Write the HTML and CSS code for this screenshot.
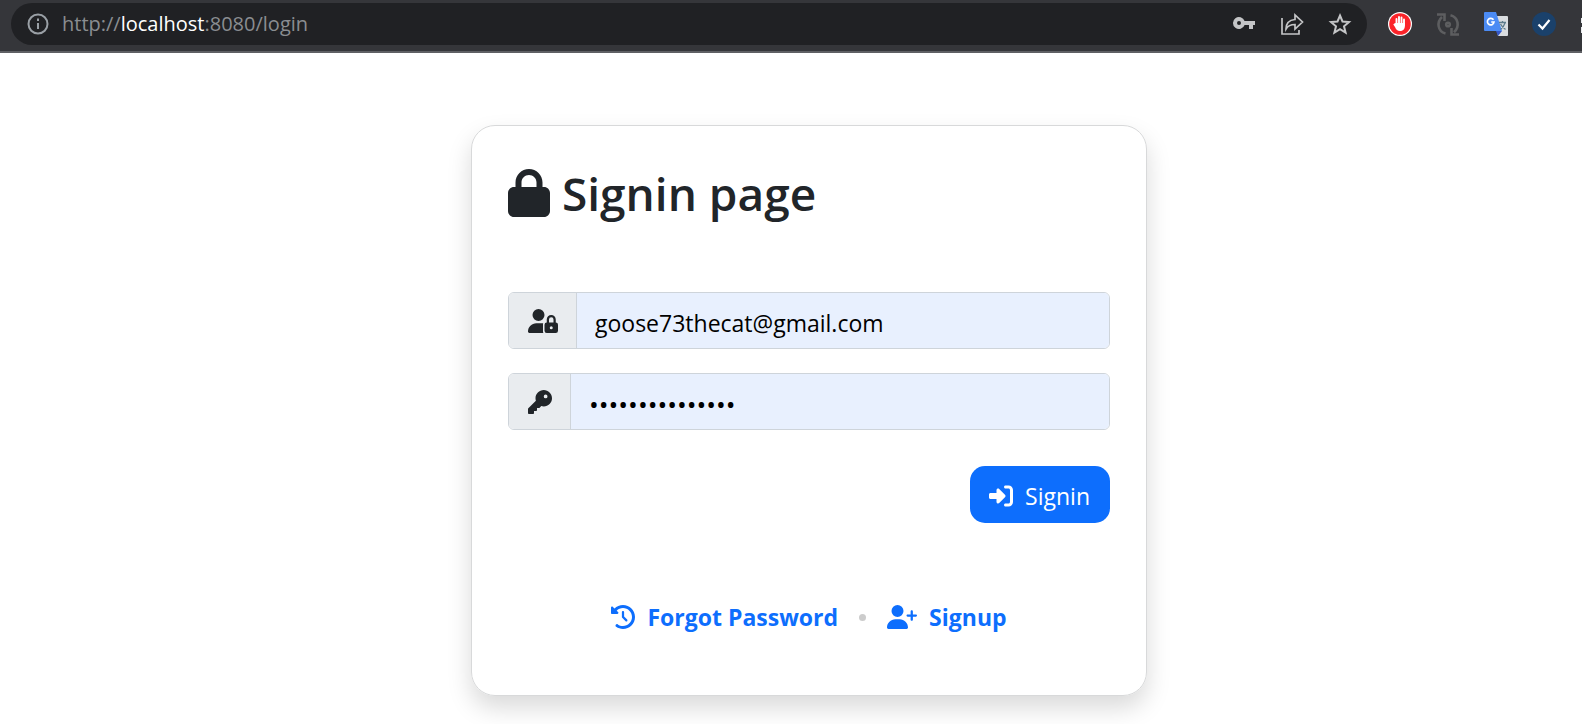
FILE: index.html
```html
<!DOCTYPE html>
<html lang="en">
<head>
<meta charset="utf-8">
<title>Signin page</title>
<link rel="stylesheet" href="styles.css">
</head>
<body>
<header class="toolbar">
  <div class="omnibox">
    <svg class="info" viewBox="0 0 22 22" fill="none" stroke="currentColor" stroke-width="2"><circle cx="11" cy="11" r="9.5"/><path d="M11 10v6M11 5.500v2.500"/></svg>
    <div class="url">http://<span class="host">localhost</span>:8080/login</div>
    <button class="tool" aria-label="Passwords"><svg viewBox="0 0 24 24" fill="currentColor"><path fill-rule="evenodd" d="M12.600 9A6 6 0 1 0 12.600 13H17v4h4v-4h2V9zM7 13a2 2 0 1 1 0-4 2 2 0 0 1 0 4z"/></svg></button>
    <button class="tool" aria-label="Share"><svg viewBox="0 0 24 24" fill="none" stroke="currentColor" stroke-width="1.700"><path d="M2 6v16h17v-4M6 17c0-6 4-9 9-9.500V3l7.500 7-7.500 7v-4.500c-4 0-7 1-9 4.500z"/></svg></button>
    <button class="tool" aria-label="Bookmark"><svg viewBox="0 0 24 24" fill="none" stroke="currentColor" stroke-width="2"><path d="M12 3.500l2.500 6 6.500.500-5 4.300 1.600 6.400L12 17.200l-5.600 3.500L8 14.300 3 10l6.500-.500z"/></svg></button>
  </div>
  <div class="extensions">
    <button class="tool" aria-label="Ad blocker"><svg viewBox="0 0 24 24"><circle cx="12" cy="12" r="12" fill="#fff"/><circle cx="12" cy="12" r="10.800" fill="#fb2329"/><path d="M8.500 13V7M11 12V5M13.500 12V5.500M16 13V7.500" stroke="#fff" stroke-width="1.900" stroke-linecap="round"/><path d="M7.600 11h9.300v3c0 3-2 5-4.900 5-2.500 0-4-1.500-5-4l-1.700-2.500 1-1z" fill="#fff"/></svg></button>
    <button class="tool" aria-label="Reload extension"><svg viewBox="0 0 24 24" fill="none" stroke="#5d5e60" stroke-width="2.600"><circle cx="12" cy="12.500" r="1.800"/><path d="M9.500 21.500C1.500 19.500.500 10 6 5M14.500 3.200c8 2 9.500 11.500 3.500 17M1 2.500h7.500V9M23 22.500h-7.500V16"/></svg></button>
    <button class="tool" aria-label="Translate"><svg viewBox="0 0 24 24"><path d="M10 4h13a1 1 0 0 1 1 1v18a1 1 0 0 1-1 1H14z" fill="#d9dcdf"/><path d="M12 19h6l-4 5z" fill="#3457c8"/><path d="M1 0h11l6 19H1a1 1 0 0 1-1-1V1a1 1 0 0 1 1-1z" fill="#4b8bf4"/><path d="M9.500 7.800A3.300 3.300 0 1 0 10 10H7.200" fill="none" stroke="#fff" stroke-width="1.700"/><path d="M15 10.500h7M18.500 9v1.500M21 11c-1 3-2.500 5-4.500 6.500M16.500 12c1 2 3 4 5 5.500" fill="none" stroke="#5f7d8c" stroke-width="1.300"/></svg></button>
    <button class="tool" aria-label="Checker"><svg viewBox="0 0 24 24" fill="none"><circle cx="12" cy="12" r="12" fill="#1a416b"/><path d="M6.500 12.500l4 4L17.500 8" stroke="#fff" stroke-width="2.200"/></svg></button>
    <button class="tool" aria-label="Extensions"><svg viewBox="0 0 24 24" fill="#e8eaed"><path d="M1 6h4V3h6v3h9v15H1v-6h3v-4H1z"/></svg></button>
  </div>
</header>
<main class="page">
  <form class="card">
    <h1 class="title"><svg viewBox="0 0 448 512" fill="currentColor"><path d="M144 144v48H304V144c0-44.200-35.800-80-80-80s-80 35.800-80 80zM80 192V144C80 64.500 144.500 0 224 0s144 64.500 144 144v48h16c35.300 0 64 28.700 64 64V448c0 35.300-28.700 64-64 64H64c-35.300 0-64-28.700-64-64V256c0-35.300 28.700-64 64-64H80z"/></svg>Signin page</h1>
    <div class="group">
      <label class="addon" for="email"><svg class="wide" viewBox="0 0 640 512" fill="currentColor" role="img" aria-label="Email"><path fill-rule="evenodd" d="M224 256A128 128 0 1 0 224 0a128 128 0 1 0 0 256zM178 304h146c-3 10-4 20-4 32v144c0 12 3 23 8 32H30c-17 0-30-13-30-30C0 384 80 304 178 304zM400 288v-64a96 96 0 0 1 192 0v64a48 48 0 0 1 48 48v128a48 48 0 0 1-48 48H400a48 48 0 0 1-48-48V336a48 48 0 0 1 48-48zm48 0h96v-64a48 48 0 0 0-96 0zm48 80a32 32 0 1 0 0 64 32 32 0 0 0 0-64z"/></svg></label>
      <input class="field" id="email" type="email" value="goose73thecat@gmail.com">
    </div>
    <div class="group">
      <label class="addon" for="password"><svg viewBox="0 0 512 512" fill="currentColor" role="img" aria-label="Password"><path d="M336 352c97.200 0 176-78.800 176-176S433.200 0 336 0S160 78.800 160 176c0 18.700 2.900 36.800 8.300 53.700L7 391c-4.500 4.500-7 10.600-7 17v80c0 13.300 10.700 24 24 24h80c13.300 0 24-10.700 24-24V448h40c13.300 0 24-10.700 24-24V384h40c6.400 0 12.500-2.500 17-7l33.300-33.300c16.900 5.400 35 8.300 53.700 8.300zM376 96a40 40 0 1 1 0 80 40 40 0 1 1 0-80z"/></svg></label>
      <input class="field secret" id="password" type="password" value="goose73password">
    </div>
    <button class="submit" type="submit"><svg viewBox="0 0 512 512" fill="currentColor"><path d="M217.900 105.900L340.700 228.700c7.200 7.200 11.300 17.100 11.300 27.300s-4.100 20.100-11.300 27.300L217.900 406.100c-6.400 6.400-15 9.900-24 9.900c-18.700 0-33.900-15.200-33.900-33.900l0-62.100L32 320c-17.700 0-32-14.300-32-32l0-64c0-17.700 14.300-32 32-32l128 0 0-62.100c0-18.700 15.200-33.900 33.900-33.900c9 0 17.600 3.600 24 9.900zM352 416l64 0c17.700 0 32-14.300 32-32l0-256c0-17.700-14.300-32-32-32l-64 0c-17.700 0-32-14.300-32-32s14.300-32 32-32l64 0c53 0 96 43 96 96l0 256c0 53-43 96-96 96l-64 0c-17.700 0-32-14.300-32-32s14.300-32 32-32z"/></svg>Signin</button>
    <nav class="links">
      <a href="#forgot"><svg viewBox="0 0 512 512" fill="currentColor"><path d="M75 75L41 41C25.900 25.900 0 36.600 0 57.900V168c0 13.300 10.700 24 24 24H134.100c21.400 0 32.100-25.900 17-41l-30.800-30.800C155 85.500 203 64 256 64c106 0 192 86 192 192s-86 192-192 192c-40.800 0-78.600-12.700-109.700-34.400c-14.500-10.100-34.400-6.600-44.600 7.900s-6.600 34.400 7.900 44.600C151.200 495 201.700 512 256 512c141.400 0 256-114.600 256-256S397.400 0 256 0C185.300 0 121.300 28.700 75 75zm181 53c-13.300 0-24 10.700-24 24V256c0 6.400 2.500 12.500 7 17l72 72c9.400 9.400 24.600 9.400 33.900 0s9.400-24.600 0-33.900l-65-65V152c0-13.300-10.700-24-24-24z"/></svg>Forgot Password</a>
      <span class="dot"></span>
      <a href="#signup"><svg class="wide" viewBox="0 0 640 512" fill="currentColor"><path d="M96 128a128 128 0 1 1 256 0A128 128 0 1 1 96 128zM0 482.300C0 383.800 79.800 304 178.300 304h91.400C368.200 304 448 383.800 448 482.300c0 16.400-13.300 29.700-29.700 29.700H29.700C13.300 512 0 498.700 0 482.300zM504 312V248H440c-13.300 0-24-10.700-24-24s10.700-24 24-24h64V136c0-13.300 10.700-24 24-24s24 10.700 24 24v64h64c13.300 0 24 10.700 24 24s-10.700 24-24 24H552v64c0 13.300-10.700 24-24 24s-24-10.700-24-24z"/></svg>Signup</a>
    </nav>
  </form>
</main>
</body>
</html>
```
FILE: styles.css
```css
* { box-sizing: border-box; }
body {
  margin: 0;
  min-height: 100vh;
  overflow: hidden;
  background: #fff;
  color: #212529;
  font: 23px/36px "Open Sans", "Noto Sans", sans-serif;
}
svg { display: block; height: 24px; width: 24px; flex: none; }
svg.wide { width: 30px; }
button { border: 0; padding: 0; background: none; font: inherit; color: inherit; }
.toolbar {
  display: flex;
  align-items: flex-start;
  overflow: hidden;
  background: #35363a;
  border-bottom: 2px solid #5f6064;
  padding: 3px 0 6px 11px;
}
.omnibox {
  flex: 1;
  display: flex;
  align-items: center;
  gap: 24px;
  height: 42px;
  border-radius: 21px;
  background: #202124;
  color: #c4c5c7;
  padding: 0 15px 0 16px;
}
.omnibox .info { width: 22px; height: 22px; color: #9aa0a6; }
.url { flex: 1; margin-left: -11px; color: #8a8d91; font-size: 20px; }
.host { color: #fff; }
.extensions {
  display: flex;
  align-items: center;
  gap: 24px;
  height: 42px;
  margin-right: -22px;
  padding-left: 21px;
}
.page { display: flex; justify-content: center; padding: 72px 0 29px 36px; }
.card {
  display: flex;
  flex-direction: column;
  width: 676px;
  border: 1px solid #d8d9da;
  border-radius: 24px;
  box-shadow: 0 12px 24px rgba(0, 0, 0, .15);
  padding: 38px 36px 60px;
}
.title {
  display: flex;
  align-items: center;
  gap: 12px;
  margin: 0 0 70px;
  font-size: 46px;
  font-weight: 600;
  line-height: 58px;
}
.title svg { width: 42px; height: 48px; }
.group {
  display: flex;
  height: 57px;
  margin-bottom: 24px;
  border: 1px solid #ced4da;
  border-radius: 6px;
  overflow: hidden;
}
.addon {
  display: flex;
  align-items: center;
  padding: 0 18px 0 19px;
  background: #e9ecef;
  border-right: 1px solid #ced4da;
}
.field {
  flex: 1;
  min-width: 0;
  border: 0;
  padding: 4px 18px 0;
  background: #e8f0fe;
  color: #000;
  font: inherit;
}
.secret { font-size: 26px; }
.submit {
  align-self: flex-end;
  display: flex;
  align-items: center;
  gap: 12px;
  height: 57px;
  margin-top: 12px;
  padding: 2px 20px 0 19px;
  border-radius: 15px;
  background: #0d6efd;
  color: #fff;
}
.links {
  display: flex;
  justify-content: center;
  align-items: center;
  gap: 21px;
  margin-top: 76px;
  font-weight: 700;
}
.links a {
  display: flex;
  align-items: center;
  gap: 12px;
  color: #0d6efd;
  text-decoration: none;
}
.dot { width: 7px; height: 7px; border-radius: 50%; background: #ccc; }
```
